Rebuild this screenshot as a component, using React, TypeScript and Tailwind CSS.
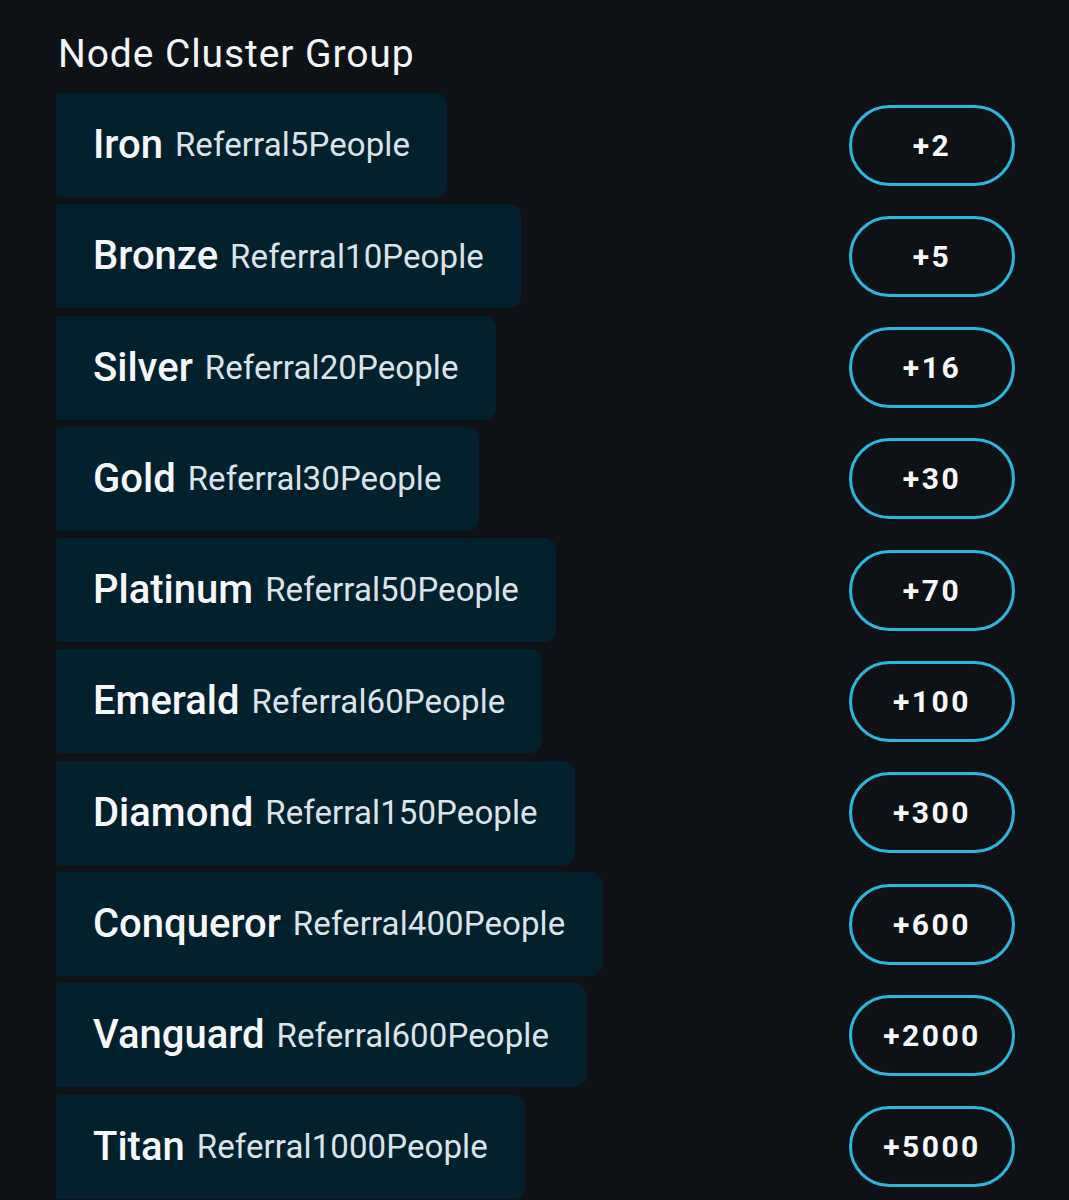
const tiers = [
  { name: 'Iron', people: 5, reward: '+2' },
  { name: 'Bronze', people: 10, reward: '+5' },
  { name: 'Silver', people: 20, reward: '+16' },
  { name: 'Gold', people: 30, reward: '+30' },
  { name: 'Platinum', people: 50, reward: '+70' },
  { name: 'Emerald', people: 60, reward: '+100' },
  { name: 'Diamond', people: 150, reward: '+300' },
  { name: 'Conqueror', people: 400, reward: '+600' },
  { name: 'Vanguard', people: 600, reward: '+2000' },
  { name: 'Titan', people: 1000, reward: '+5000' },
]

export default function App() {
  return (
    <div className="min-h-[1200px] bg-[#0e1216] pl-[56px] pr-[54px] pt-[30px] font-['Roboto',sans-serif] text-white">
      <h1 className="m-0 pl-[2px] text-[39px] leading-[48px] font-normal tracking-[0.9px] text-[#f2f4f6]">Node Cluster Group</h1>
      <ul className="mt-[15px] flex flex-col gap-[7.3px]">
        {tiers.map((t) => (
          <li key={t.name} className="flex h-[104px] items-center justify-between">
            <div className="flex h-full items-center rounded-r-[12px] rounded-l-[4px] bg-[#03202d] pl-[37px] pr-[37px]">
              <span className="text-[40px] font-medium text-[#f5f7f9]">{t.name}</span>
              <span className="ml-[12px] text-[33px] tracking-[0.1px] text-[#dbe3ea]">Referral{t.people}People</span>
            </div>
            <div className="flex h-[81px] w-[166px] items-center justify-center rounded-full border-[3px] border-[#2db6da] text-[30px] font-bold tracking-[2.5px] text-[#f5f7f9]">
              {t.reward}
            </div>
          </li>
        ))}
      </ul>
    </div>
  )
}
